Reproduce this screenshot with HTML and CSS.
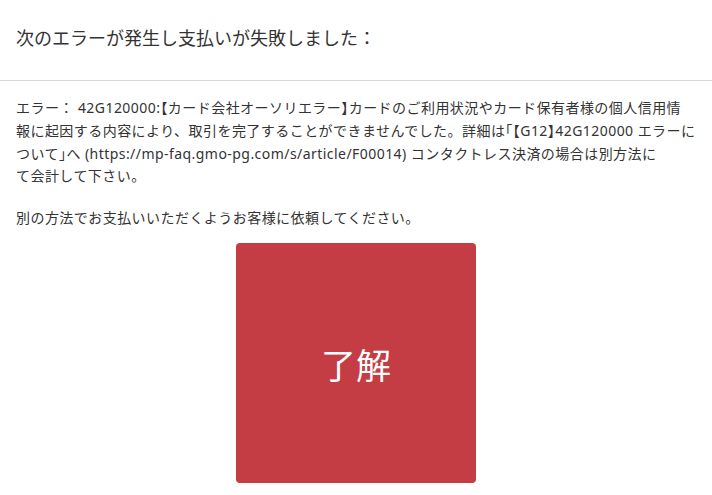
FILE: index.html
```html
<!DOCTYPE html>
<html lang="ja">
<head>
<meta charset="utf-8">
<link rel="stylesheet" href="styles.css">
</head>
<body>
<div class="dialog">
  <header class="header">
    <h1 class="title">次のエラーが発生し支払いが失敗しました：</h1>
  </header>
  <main class="content">
    <p class="msg">エラー： 42G120000:<span class="br">【</span>カード会社オーソリエラー<span class="br">】</span>カードのご利用状況やカード保有者様の個人信用情<br>報に起因する内容により、取引を完了することができませんでした。詳細は<span class="br">「【</span>G12<span class="br">】</span>42G120000 エラーに<br>ついて<span class="br">」</span>へ (https://mp-faq.gmo-pg.com/s/article/F00014) コンタクトレス決済の場合は別方法に<br>て会計して下さい。</p>
    <p class="msg">別の方法でお支払いいただくようお客様に依頼してください。</p>
    <div class="actions">
      <button class="ok">了解</button>
    </div>
  </main>
</div>
</body>
</html>
```
FILE: styles.css
```css
html, body {
  margin: 0;
  padding: 0;
  background: #ffffff;
}
body {
  font-family: "Noto Sans", "Noto Sans CJK JP", sans-serif;
  color: #333333;
}
.dialog {
  width: 712px;
}
.header {
  padding: 23px 16px 29px;
  border-bottom: 1px solid #d5d5da;
}
.title {
  margin: 0;
  font-family: "Noto Sans CJK JP", sans-serif;
  font-size: 18px;
  font-weight: 400;
  line-height: 28px;
  color: #333333;
}
.content {
  padding: 15px 16px 0;
}
.msg {
  margin: 0;
  font-size: 14px;
  line-height: 22px;
  letter-spacing: 0.45px;
}
.msg + .msg {
  margin-top: 20px;
}
.br {
  font-family: "Noto Sans CJK JP", sans-serif;
  font-feature-settings: "halt";
}
.actions {
  display: flex;
  justify-content: center;
  margin-top: 14px;
}
.ok {
  width: 240px;
  height: 240px;
  border: none;
  border-radius: 4px;
  background: #c53d44;
  color: #ffffff;
  font-family: "Noto Sans CJK JP", sans-serif;
  font-size: 35px;
  font-weight: 400;
  padding: 0;
}
```
